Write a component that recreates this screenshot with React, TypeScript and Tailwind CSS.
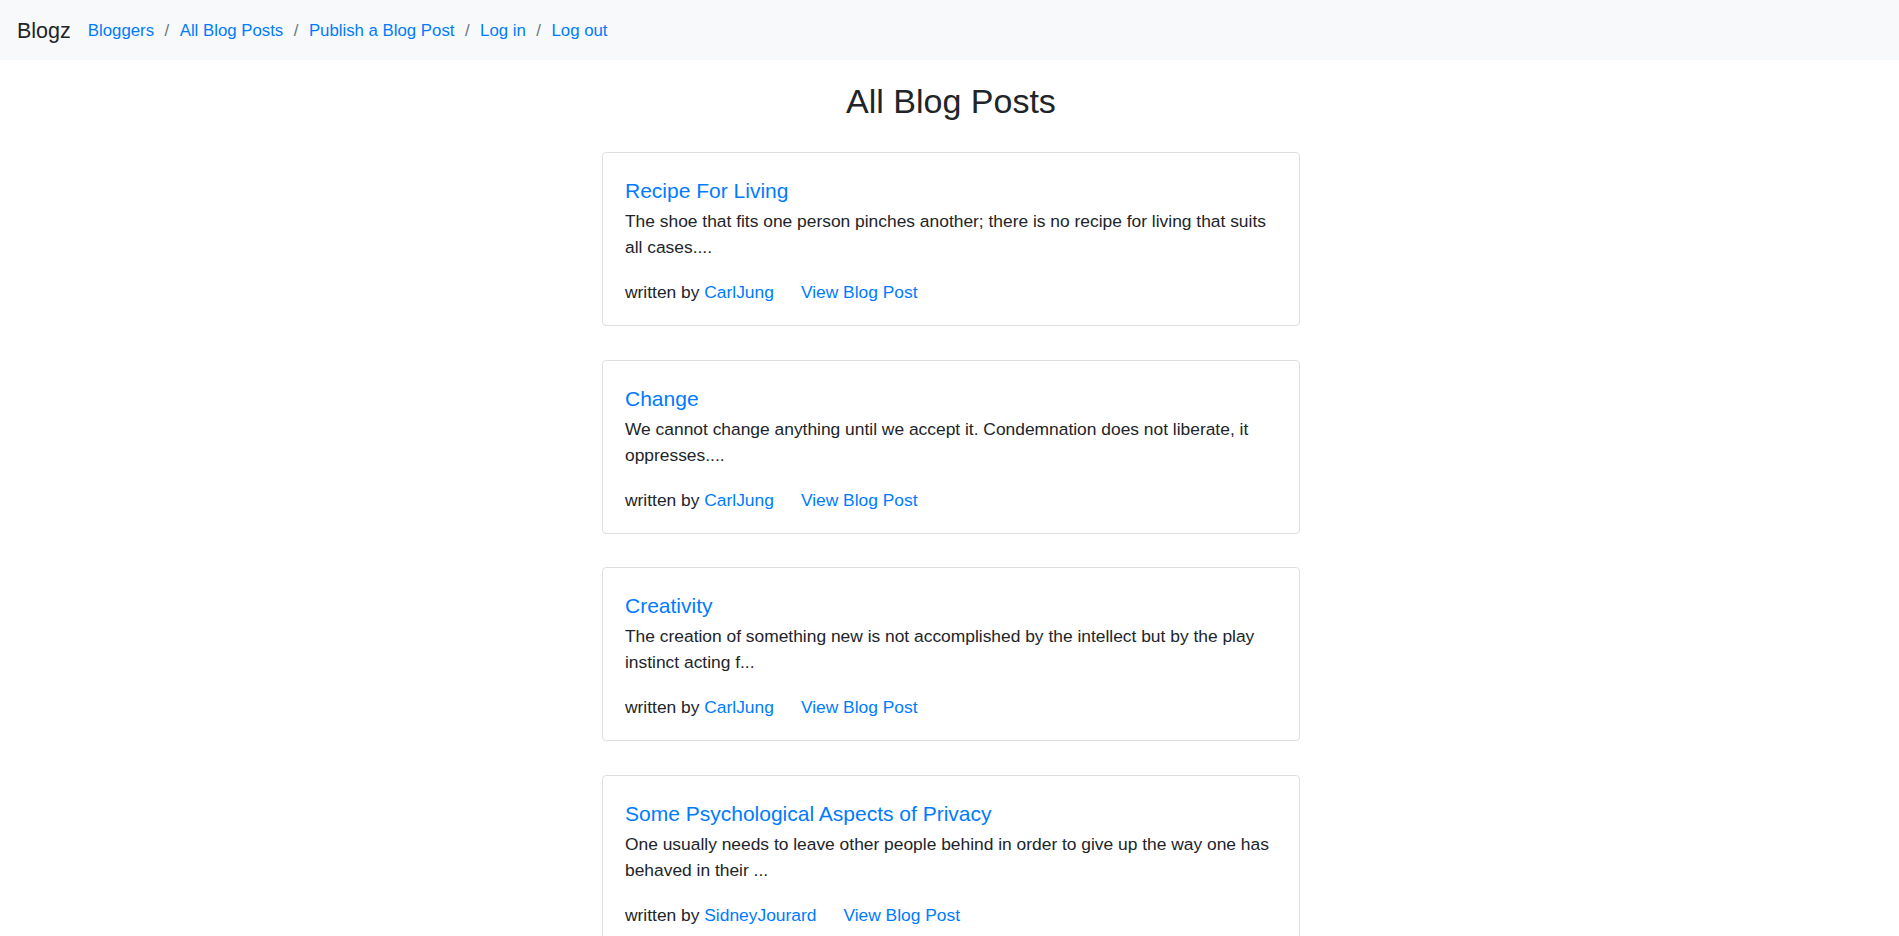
const posts = [
  {
    title: "Recipe For Living",
    body: "The shoe that fits one person pinches another; there is no recipe for living that suits all cases....",
    author: "CarlJung",
  },
  {
    title: "Change",
    body: "We cannot change anything until we accept it. Condemnation does not liberate, it oppresses....",
    author: "CarlJung",
  },
  {
    title: "Creativity",
    body: "The creation of something new is not accomplished by the intellect but by the play instinct acting f...",
    author: "CarlJung",
  },
  {
    title: "Some Psychological Aspects of Privacy",
    body: "One usually needs to leave other people behind in order to give up the way one has behaved in their ...",
    author: "SidneyJourard",
  },
];

const links = ["Bloggers", "All Blog Posts", "Publish a Blog Post", "Log in", "Log out"];

function Navbar() {
  return (
    <nav className="flex h-[60px] items-center bg-[#f8f9fa] pl-[17px] pt-[2px]">
      <a href="#" className="mr-[17px] text-[21.5px] leading-[30px] text-[#212529]">
        Blogz
      </a>
      <ol className="flex items-center text-[16.8px] leading-[26px]">
        {links.map((link, i) => (
          <li key={link} className="flex items-center">
            {i > 0 && <span className="mx-[10.5px] text-[#6c757d]">/</span>}
            <a href="#" className="text-[#007bff]">
              {link}
            </a>
          </li>
        ))}
      </ol>
    </nav>
  );
}

function PostCard({ title, body, author }: { title: string; body: string; author: string }) {
  return (
    <div className="w-[698px] rounded-[4px] border border-[#dfdfdf] bg-white">
      <div className="px-[22px] pb-[20px] pt-[25px]">
        <h5 className="mb-[5px] text-[21px] leading-[25px] text-[#007bff]">
          <a href="#">{title}</a>
        </h5>
        <p className="text-[17.4px] leading-[26px] text-[#212529]">{body}</p>
        <div className="mt-[19px] text-[17.4px] leading-[26px] text-[#212529]">
          written by{" "}
          <a href="#" className="text-[#007bff]">
            {author}
          </a>
          <a href="#" className="ml-[27px] text-[#007bff]">
            View Blog Post
          </a>
        </div>
      </div>
    </div>
  );
}

export default function App() {
  return (
    <div className="min-h-screen bg-white font-['Liberation_Sans',Arial,sans-serif] text-[#212529]">
      <Navbar />
      <main className="flex flex-col items-center pl-[3px]">
        <h2 className="mb-[30px] mt-[21px] text-[34px] leading-[41px] font-normal">All Blog Posts</h2>
        <div className="flex flex-col gap-[33.5px] pb-10">
          {posts.map((p) => (
            <PostCard key={p.title} {...p} />
          ))}
        </div>
      </main>
    </div>
  );
}
